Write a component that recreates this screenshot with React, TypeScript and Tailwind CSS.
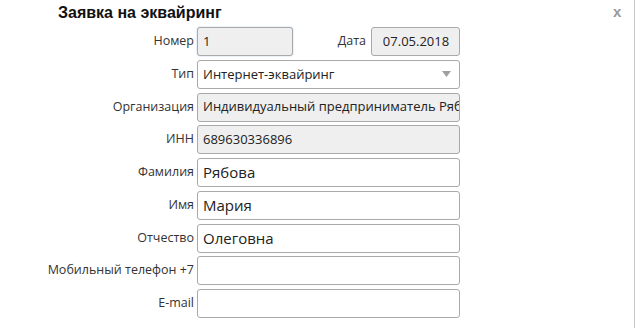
import React from "react";

const labelCls = "w-[197px] shrink-0 text-right pr-[3px] text-[12.5px] text-[#333]";
const inputBase = "h-[29px] rounded-[3px] border border-[#a9a9a9] pl-[5px] pr-[4px] flex items-center text-[13px] text-[#222] overflow-hidden whitespace-nowrap";

function Row({ label, value, ro, big }: { label: string; value?: string; ro?: boolean; big?: boolean }) {
  return (
    <div className="flex items-center">
      <div className={labelCls}>{label}</div>
      <div className={`${inputBase} w-[263px] ${ro ? "bg-[#efefef]" : "bg-white"} ${big ? "text-[15px]" : ""}`}>{value}</div>
    </div>
  );
}

export default function App() {
  return (
    <div className="w-[644px] h-[328px] bg-white flex overflow-hidden" style={{ fontFamily: '"Open Sans", "Noto Sans", sans-serif' }}>
      <div className="w-[634px] relative">
        <div className="absolute left-[613px] top-[1px] text-[15px] font-bold text-[#999]" style={{ fontFamily: '"Liberation Sans", Arial, sans-serif' }}>x</div>
        <div className="pl-[58px] pt-[1px] h-[27px] text-[16px] font-bold text-[#111]" style={{ fontFamily: '"Liberation Sans", Arial, sans-serif' }}>
          Заявка на эквайринг
        </div>
        <div className="flex flex-col gap-[3.75px]">
          <div className="flex items-center">
            <div className={labelCls}>Номер</div>
            <div className={`${inputBase} w-[96px] bg-[#efefef] border-[#9db8e6] shadow-[0_0_2px_#b8cdf0]`}>1</div>
            <div className="w-[78px] text-right pr-[5px] text-[12.5px] text-[#333]">Дата</div>
            <div className={`${inputBase} w-[89px] bg-[#efefef] justify-center`}>07.05.2018</div>
          </div>
          <div className="flex items-center">
            <div className={labelCls}>Тип</div>
            <div className={`${inputBase} w-[263px] bg-white justify-between`}>
              <span>Интернет-эквайринг</span>
              <svg width="9" height="6" viewBox="0 0 9 6" className="mr-[4px]"><path d="M0 0h9L4.5 6z" fill="#a0a0a0" /></svg>
            </div>
          </div>
          <Row label="Организация" value="Индивидуальный предприниматель Рябова" ro />
          <Row label="ИНН" value="689630336896" ro />
          <Row label="Фамилия" value="Рябова" big />
          <Row label="Имя" value="Мария" big />
          <Row label="Отчество" value="Олеговна" big />
          <Row label="Мобильный телефон +7" value="" />
          <Row label="E-mail" value="" />
        </div>
      </div>
      <div className="w-[1px] h-full bg-[#c8c8c8]" />
      <div className="flex-1 bg-white" />
    </div>
  );
}
